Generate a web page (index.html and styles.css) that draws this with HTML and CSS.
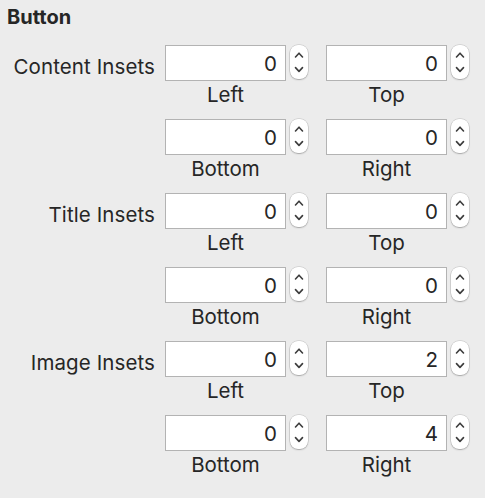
FILE: index.html
```html
<!DOCTYPE html>
<html>
<head>
<meta charset="utf-8">
<link rel="stylesheet" href="styles.css">
</head>
<body>
<div class="panel">
  <div class="title">Button</div>
  <div class="rows">
    <div class="row">
      <div class="row-label">Content Insets</div>
      <div class="cell"><div class="field">0</div><div class="stepper"><svg viewBox="0 0 18 33" width="18" height="33"><path d="M5.5 12L9 8.2L12.5 12M5.5 22.6L9 26.4L12.5 22.6"/></svg></div><div class="caption">Left</div></div>
      <div class="cell"><div class="field">0</div><div class="stepper"><svg viewBox="0 0 18 33" width="18" height="33"><path d="M5.5 12L9 8.2L12.5 12M5.5 22.6L9 26.4L12.5 22.6"/></svg></div><div class="caption">Top</div></div>
    </div>
    <div class="row">
      <div class="row-label"></div>
      <div class="cell"><div class="field">0</div><div class="stepper"><svg viewBox="0 0 18 33" width="18" height="33"><path d="M5.5 12L9 8.2L12.5 12M5.5 22.6L9 26.4L12.5 22.6"/></svg></div><div class="caption">Bottom</div></div>
      <div class="cell"><div class="field">0</div><div class="stepper"><svg viewBox="0 0 18 33" width="18" height="33"><path d="M5.5 12L9 8.2L12.5 12M5.5 22.6L9 26.4L12.5 22.6"/></svg></div><div class="caption">Right</div></div>
    </div>
    <div class="row">
      <div class="row-label">Title Insets</div>
      <div class="cell"><div class="field">0</div><div class="stepper"><svg viewBox="0 0 18 33" width="18" height="33"><path d="M5.5 12L9 8.2L12.5 12M5.5 22.6L9 26.4L12.5 22.6"/></svg></div><div class="caption">Left</div></div>
      <div class="cell"><div class="field">0</div><div class="stepper"><svg viewBox="0 0 18 33" width="18" height="33"><path d="M5.5 12L9 8.2L12.5 12M5.5 22.6L9 26.4L12.5 22.6"/></svg></div><div class="caption">Top</div></div>
    </div>
    <div class="row">
      <div class="row-label"></div>
      <div class="cell"><div class="field">0</div><div class="stepper"><svg viewBox="0 0 18 33" width="18" height="33"><path d="M5.5 12L9 8.2L12.5 12M5.5 22.6L9 26.4L12.5 22.6"/></svg></div><div class="caption">Bottom</div></div>
      <div class="cell"><div class="field">0</div><div class="stepper"><svg viewBox="0 0 18 33" width="18" height="33"><path d="M5.5 12L9 8.2L12.5 12M5.5 22.6L9 26.4L12.5 22.6"/></svg></div><div class="caption">Right</div></div>
    </div>
    <div class="row">
      <div class="row-label">Image Insets</div>
      <div class="cell"><div class="field">0</div><div class="stepper"><svg viewBox="0 0 18 33" width="18" height="33"><path d="M5.5 12L9 8.2L12.5 12M5.5 22.6L9 26.4L12.5 22.6"/></svg></div><div class="caption">Left</div></div>
      <div class="cell"><div class="field">2</div><div class="stepper"><svg viewBox="0 0 18 33" width="18" height="33"><path d="M5.5 12L9 8.2L12.5 12M5.5 22.6L9 26.4L12.5 22.6"/></svg></div><div class="caption">Top</div></div>
    </div>
    <div class="row">
      <div class="row-label"></div>
      <div class="cell"><div class="field">0</div><div class="stepper"><svg viewBox="0 0 18 33" width="18" height="33"><path d="M5.5 12L9 8.2L12.5 12M5.5 22.6L9 26.4L12.5 22.6"/></svg></div><div class="caption">Bottom</div></div>
      <div class="cell"><div class="field">4</div><div class="stepper"><svg viewBox="0 0 18 33" width="18" height="33"><path d="M5.5 12L9 8.2L12.5 12M5.5 22.6L9 26.4L12.5 22.6"/></svg></div><div class="caption">Right</div></div>
    </div>
  </div>
</div>
</body>
</html>
```
FILE: styles.css
```css
html, body {
  margin: 0;
  padding: 0;
  background: #ececec;
}
body {
  font-family: Inter, "Liberation Sans", sans-serif;
  font-size: 20.5px;
  color: #262626;
  width: 485px;
  height: 498px;
  overflow: hidden;
}
.panel {
  padding: 5px 0 0 7px;
}
.title {
  font-weight: 700;
  font-size: 20px;
  line-height: 24px;
  height: 24px;
}
.rows {
  margin-top: 16px;
  display: flex;
  flex-direction: column;
  gap: 12px;
}
.row {
  display: flex;
  align-items: flex-start;
}
.row-label {
  flex: 0 0 148px;
  padding-right: 10px;
  padding-top: 10px;
  text-align: right;
  line-height: 24px;
  white-space: nowrap;
  letter-spacing: 0.1px;
}
.cell {
  flex: 0 0 auto;
  display: grid;
  grid-template-columns: 121px 18px;
  column-gap: 4px;
  margin-right: 18px;
}
.cell:last-child {
  margin-right: 0;
}
.field {
  box-sizing: border-box;
  height: 36px;
  background: #ffffff;
  border: 1px solid #b3b3b3;
  text-align: right;
  padding: 2px 8px 0 0;
  line-height: 32px;
}
.stepper {
  box-sizing: border-box;
  width: 18px;
  height: 34px;
  background: #ffffff;
  border-radius: 8px;
  box-shadow: 0 0 0 0.5px rgba(0,0,0,0.18), 0 1px 1.5px rgba(0,0,0,0.22);
}
.stepper svg {
  display: block;
}
.stepper path {
  fill: none;
  stroke: #3c3c3c;
  stroke-width: 1.6;
  stroke-linecap: round;
  stroke-linejoin: round;
}
.caption {
  grid-column: 1;
  text-align: center;
  line-height: 24px;
  margin-top: 2px;
}
```
